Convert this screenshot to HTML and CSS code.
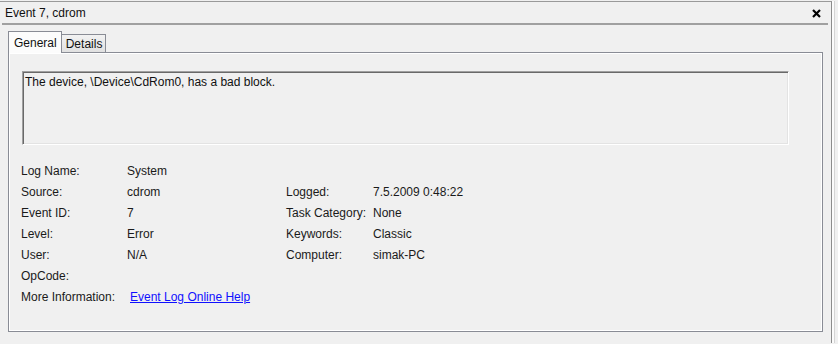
FILE: index.html
```html
<!DOCTYPE html>
<html lang="en">
<head>
	<meta charset="utf-8"/>
	<title>Event 7, cdrom</title>
	<link rel="stylesheet" href="styles.css">
</head>
<body>

<div class="frame">
	<div class="titlebar">
		<span class="title">Event 7, cdrom</span>
		<span class="close">
			<svg width="9" height="9" viewBox="0 0 9 9"><path d="M1 1 L8 8 M8 1 L1 8" stroke="#000" stroke-width="2.2" fill="none"/></svg>
		</span>
	</div>

	<div class="tabs">
		<div class="tab selected">General</div>
		<div class="tab">Details</div>
	</div>

	<div class="panel">
		<div class="description">The device, \Device\CdRom0, has a bad block.</div>

		<div class="fields">
			<span>Log Name:</span><span>System</span><span></span><span></span>
			<span>Source:</span><span>cdrom</span><span>Logged:</span><span>7.5.2009 0:48:22</span>
			<span>Event ID:</span><span>7</span><span>Task Category:</span><span>None</span>
			<span>Level:</span><span>Error</span><span>Keywords:</span><span>Classic</span>
			<span>User:</span><span>N/A</span><span>Computer:</span><span>simak-PC</span>
			<span>OpCode:</span><span></span><span></span><span></span>
			<span>More Information:</span><span class="more"><a href="#">Event Log Online Help</a></span><span></span><span></span>
		</div>
	</div>
</div>

</body>
</html>
```

FILE: styles.css
```css
body {
	background: #f0f0f0;
	color: #1a1a1a;
	font: 12px 'Liberation Sans', Arial, sans-serif;
	margin: 0;
	padding: 1px 0 0 0;
}

.frame {
	width: 832px;
	height: 342px;
	border-top: 1px solid #9a9a9a;
	border-right: 1px solid #8c8c8c;
	box-shadow: 2px 0 0 #fbfbfb, 3px 0 0 #d4d4d4;
	box-sizing: border-box;
}

.titlebar {
	display: flex;
	justify-content: space-between;
	align-items: center;
	height: 21px;
	margin: 0 3px 0 2px;
	padding: 0 7px 0 3px;
	border-bottom: 2px solid #a0a0a0;
}

.title {
	color: #111;
}

.close {
	display: flex;
	padding-top: 2px;
}

.tabs {
	display: flex;
	align-items: flex-end;
	margin: 6px 0 0 8px;
	height: 21px;
}

.tab {
	height: 17px;
	padding: 0 3px 0 4px;
	line-height: 18px;
	border: 1px solid #898c95;
	border-bottom: none;
	border-left: none;
	background: linear-gradient(#f2f2f2, #e1e1e1);
	color: #111;
}

.tab.selected {
	height: 21px;
	line-height: 22px;
	padding: 0 4px 0 5px;
	border-left: 1px solid #898c95;
	background: #fcfcfc;
	position: relative;
	z-index: 1;
	margin-bottom: -1px;
}

.panel {
	width: 815px;
	height: 280px;
	margin-left: 8px;
	border: 1px solid #898c95;
	box-shadow: inset 1px 1px 0 #fff, inset -1px -1px 0 #fff;
	box-sizing: border-box;
	padding: 18px 0 0 12px;
}

.description {
	width: 767px;
	height: 74px;
	box-sizing: border-box;
	margin-left: 1px;
	padding: 3px 2px;
	border-top: 1px solid #a0a0a0;
	border-left: 1px solid #a0a0a0;
	border-right: 1px solid #fff;
	border-bottom: 1px solid #fff;
	box-shadow: inset 1px 1px 0 #696969, inset -1px -1px 0 #e3e3e3;
	color: #111;
}

.fields {
	display: grid;
	grid-template-columns: 106px 159px 87px auto;
	grid-auto-rows: 21px;
	line-height: 21px;
	margin-top: 16px;
}

.more {
	padding-left: 3px;
}

a {
	color: #1010ff;
	text-decoration: underline;
}
```
